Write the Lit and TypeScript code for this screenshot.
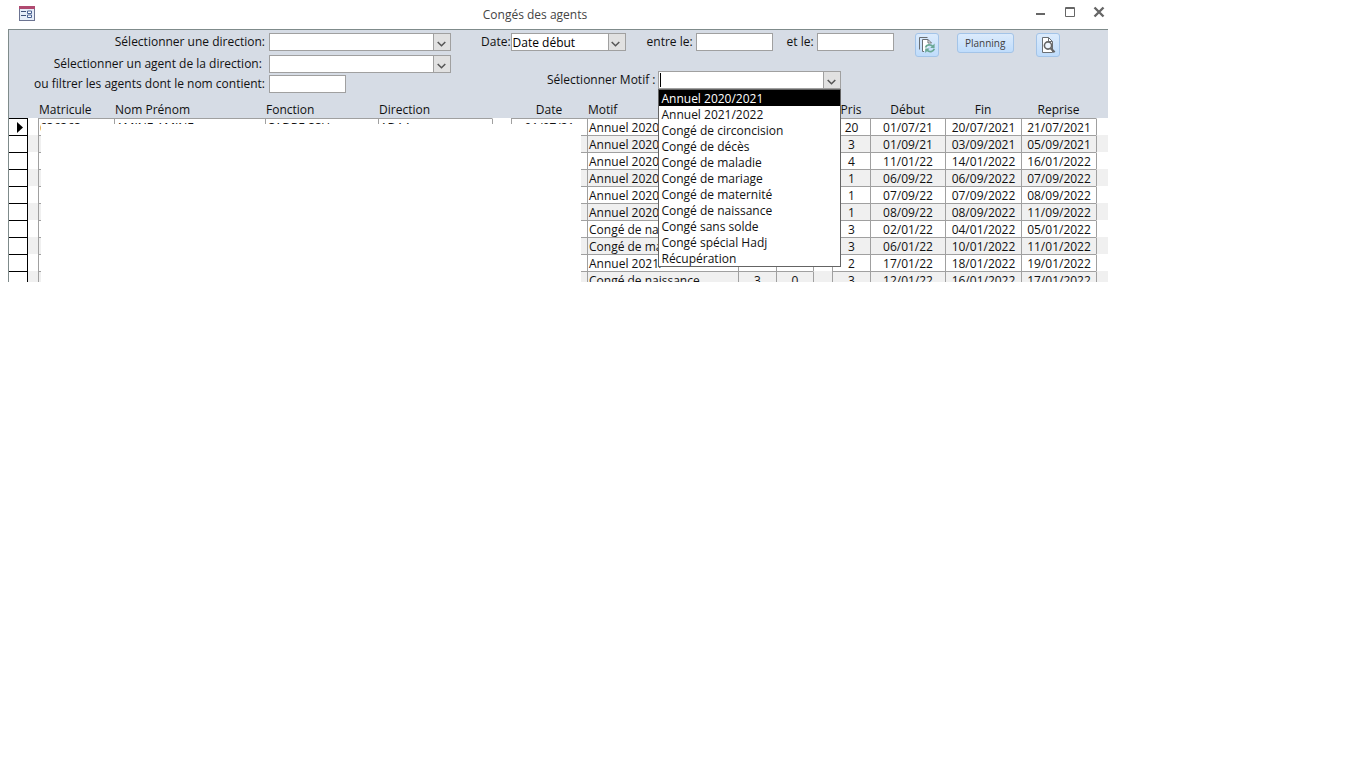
import { LitElement, html, css } from "lit";
import { customElement } from "lit/decorators.js";

const MOTIFS = [
  "Annuel 2020/2021",
  "Annuel 2021/2022",
  "Congé de circoncision",
  "Congé de décès",
  "Congé de maladie",
  "Congé de mariage",
  "Congé de maternité",
  "Congé de naissance",
  "Congé sans solde",
  "Congé spécial Hadj",
  "Récupération",
];

interface Conge {
  motif: string;
  droit?: string;
  reste?: string;
  pris: string;
  debut: string;
  fin: string;
  reprise: string;
}

const ROWS: Conge[] = [
  { motif: "Annuel 2020", pris: "20", debut: "01/07/21", fin: "20/07/2021", reprise: "21/07/2021" },
  { motif: "Annuel 2020", pris: "3", debut: "01/09/21", fin: "03/09/2021", reprise: "05/09/2021" },
  { motif: "Annuel 2020", pris: "4", debut: "11/01/22", fin: "14/01/2022", reprise: "16/01/2022" },
  { motif: "Annuel 2020", pris: "1", debut: "06/09/22", fin: "06/09/2022", reprise: "07/09/2022" },
  { motif: "Annuel 2020", pris: "1", debut: "07/09/22", fin: "07/09/2022", reprise: "08/09/2022" },
  { motif: "Annuel 2020", pris: "1", debut: "08/09/22", fin: "08/09/2022", reprise: "11/09/2022" },
  { motif: "Congé de nai", pris: "3", debut: "02/01/22", fin: "04/01/2022", reprise: "05/01/2022" },
  { motif: "Congé de ma", pris: "3", debut: "06/01/22", fin: "10/01/2022", reprise: "11/01/2022" },
  { motif: "Annuel 2021/", pris: "2", debut: "17/01/22", fin: "18/01/2022", reprise: "19/01/2022" },
  { motif: "Congé de naissance", droit: "3", reste: "0", pris: "3", debut: "12/01/22", fin: "16/01/2022", reprise: "17/01/2022" },
];

const COLUMNS = [19, 10, 76, 151, 113, 114, 19, 76, 151, 38, 37, 19, 38, 75, 76, 75, 12];

const chevron = html`<svg width="9" height="6" viewBox="0 0 9 6" aria-hidden="true">
  <path d="M0.7 1L4.5 4.8L8.3 1" fill="none" stroke="#555" stroke-width="1.5" />
</svg>`;

@customElement("app-root")
export class AppRoot extends LitElement {
  static styles = css`
    :host {
      display: block;
      min-height: 100vh;
      background: #fff;
      color: #111;
      font: 12px/18px "Open Sans", "Noto Sans", sans-serif;
    }
    .window {
      max-width: 1100px;
      margin-left: 8px;
    }
    .titlebar {
      display: flex;
      align-items: center;
      height: 29px;
      padding: 0 3px 0 11px;
    }
    .titlebar > svg {
      margin-bottom: 2px;
    }
    .title {
      flex: 1;
      margin: 0;
      font-size: 12px;
      font-weight: 400;
      text-align: center;
      color: #444;
    }
    .controls {
      display: flex;
      gap: 17px;
      padding-bottom: 5px;
    }
    button {
      font: inherit;
      padding: 0;
      border: 0;
      background: none;
      color: inherit;
    }
    .control {
      display: grid;
      place-items: center;
      width: 12px;
      height: 12px;
    }
    .form {
      border-top: 1px solid #7f8b8b;
      border-left: 1px solid #7f8b8b;
      background: #d6dce5;
    }
    .filters {
      display: flex;
      padding-top: 3px;
    }
    .left {
      display: grid;
      grid-template-columns: 260px 182px;
      grid-template-rows: 22px 20px 18px;
      align-items: start;
    }
    .left label {
      justify-self: end;
      padding-right: 4px;
      white-space: pre;
    }
    .right {
      flex: 1;
      display: flex;
      flex-direction: column;
      gap: 14px;
      padding-left: 30px;
    }
    .line {
      display: flex;
      align-items: flex-start;
      height: 24px;
    }
    .line label {
      white-space: nowrap;
    }
    .motif-line {
      height: 18px;
      padding-left: 66px;
    }
    .spaced {
      padding-right: 3px;
    }
    .entre {
      padding-left: 21px;
    }
    .et {
      padding-left: 14px;
    }
    input,
    select {
      box-sizing: border-box;
      width: 100%;
      height: 18px;
      margin: 0;
      padding: 0 1px;
      border: 1px solid #a0a0a0;
      border-radius: 0;
      background: #fff;
      color: #000;
      font: inherit;
      appearance: none;
      outline: none;
    }
    .short {
      width: 77px;
    }
    .combo {
      position: relative;
      display: grid;
      grid-template-columns: 1fr 18px;
      height: 18px;
    }
    .combo > select,
    .combo > input {
      grid-area: 1 / 1 / 2 / 3;
    }
    .arrow {
      grid-area: 1 / 2;
      box-sizing: border-box;
      display: grid;
      place-items: center;
      height: 18px;
      padding: 3px 2px 0 0;
      border: 1px solid #a0a0a0;
      background: #e1e1e1;
      z-index: 1;
      pointer-events: none;
    }
    button.arrow {
      pointer-events: auto;
    }
    .date-combo {
      width: 115px;
    }
    .motif-combo {
      width: 183px;
    }
    .caret {
      position: absolute;
      left: 2px;
      top: 2px;
      width: 1px;
      height: 14px;
      background: #000;
    }
    .list {
      position: absolute;
      top: 18px;
      left: 0;
      right: 0;
      z-index: 3;
      margin: 0;
      padding: 0;
      border: 1px solid #646464;
      background: #fff;
      list-style: none;
      line-height: 14px;
    }
    .option {
      padding: 2px 2px 0;
    }
    .option[aria-selected="true"] {
      background: #000;
      color: #fff;
    }
    .action {
      box-sizing: border-box;
      display: grid;
      place-items: center;
      width: 24px;
      height: 24px;
      border: 1px solid #a3c4e8;
      border-radius: 3px;
      background: linear-gradient(#dcebfc, #bfdcfb);
    }
    .refresh {
      margin-left: 21px;
    }
    .planning {
      width: 57px;
      height: 20px;
      margin: 0 22px 0 18px;
      color: #404040;
      font-size: 10px;
      line-height: 18px;
    }
    .records {
      position: relative;
      height: 189px;
      overflow: hidden;
    }
    table {
      width: 100%;
      table-layout: fixed;
      border-collapse: separate;
      border-spacing: 0;
    }
    th {
      height: 17px;
      padding: 8px 0 0 1px;
      line-height: 17px;
      font-weight: 400;
      text-align: left;
      white-space: nowrap;
    }
    td {
      box-sizing: border-box;
      height: 17px;
      padding: 2px 0 0 1px;
      overflow: hidden;
      line-height: 14px;
      white-space: nowrap;
      border-left: 1px solid #a0a0a0;
      border-top: 1px solid #a0a0a0;
    }
    tbody tr {
      background: #fff;
    }
    tbody tr:nth-child(even) {
      background: #f0f0f0;
    }
    .center {
      padding-left: 0;
      text-align: center;
    }
    .gap {
      border-top-color: transparent;
    }
    .first-gap {
      border-color: transparent;
    }
    .selector {
      padding: 0;
      border-left: 0;
      border-top: 1px solid #000;
      border-right: 1px solid #000;
      background: #fff;
    }
    .selector svg {
      display: block;
      margin-left: 8px;
    }
    .mask {
      position: absolute;
      inset: 31px 527px 0 32px;
      background: #fff;
    }
  `;

  private combo(id: string) {
    return html`<div class="combo">
      <select id=${id}><option></option></select>
      <span class="arrow">${chevron}</span>
    </div>`;
  }

  private row(r: Conge, i: number) {
    const first = i === 0;
    return html`<tr>
      <td class="selector">
        ${first
          ? html`<svg width="6" height="11" viewBox="0 0 6 11" aria-label="Enregistrement actif"><path d="M0 0L6 5.5L0 11Z" /></svg>`
          : ""}
      </td>
      <td class="gap first-gap"></td>
      <td>${first ? "636363" : ""}</td>
      <td>${first ? "AMINE AMINE" : ""}</td>
      <td>${first ? "CADRE SSU" : ""}</td>
      <td>${first ? "ADAA" : ""}</td>
      <td class="gap"></td>
      <td class="center">${first ? "01/07/21" : ""}</td>
      <td>${r.motif}</td>
      <td class="center">${r.droit ?? ""}</td>
      <td class="center">${r.reste ?? ""}</td>
      <td class="gap"></td>
      <td class="center">${r.pris}</td>
      <td class="center">${r.debut}</td>
      <td class="center">${r.fin}</td>
      <td class="center">${r.reprise}</td>
      <td class="gap"></td>
    </tr>`;
  }

  render() {
    return html`<main class="window">
      <header class="titlebar">
        <svg width="16" height="15" viewBox="0 0 16 15" aria-hidden="true">
          <rect x="0.5" y="0.5" width="15" height="14" fill="#e6edf8" stroke="#6b7391" />
          <rect width="16" height="3" fill="#b04a70" />
          <path d="M2 5.5H7M2 9.5H7" stroke="#3f5279" />
          <path d="M8.5 5H12.5V7.5H8.5ZM8.5 9H12.5V11.5H8.5Z" fill="#fff" stroke="#4a6293" />
        </svg>
        <h1 class="title">Congés des agents</h1>
        <div class="controls">
          <button class="control" aria-label="Réduire">
            <svg width="12" height="12" viewBox="0 0 12 12"><path d="M1 8H10" stroke="#666" stroke-width="2" /></svg>
          </button>
          <button class="control" aria-label="Agrandir">
            <svg width="12" height="12" viewBox="0 0 12 12"><path d="M1.5 1.5H10.5V10.5H1.5ZM1 2.5H11" fill="none" stroke="#666" /></svg>
          </button>
          <button class="control" aria-label="Fermer">
            <svg width="12" height="12" viewBox="0 0 12 12"><path d="M1.5 1.5L10.5 10.5M10.5 1.5L1.5 10.5" stroke="#666" stroke-width="2.4" /></svg>
          </button>
        </div>
      </header>
      <section class="form">
        <div class="filters">
          <div class="left">
            <label for="direction">Sélectionner une direction:</label>
            ${this.combo("direction")}
            <label for="agent">Sélectionner un agent de la direction: </label>
            ${this.combo("agent")}
            <label for="nom">ou filtrer les agents dont le nom contient:</label>
            <input id="nom" class="short" type="text" />
          </div>
          <div class="right">
            <div class="line">
              <label for="date">Date:</label>
              <div class="combo date-combo">
                <select id="date"><option>Date début</option></select>
                <span class="arrow">${chevron}</span>
              </div>
              <label class="spaced entre" for="entre">entre le:</label>
              <input id="entre" class="short" type="text" />
              <label class="spaced et" for="et">et le:</label>
              <input id="et" class="short" type="text" />
              <button class="action refresh" aria-label="Actualiser">
                <svg width="18" height="18" viewBox="0 0 18 18" fill="none">
                  <path d="M1.5 13.5V1.5H9.5" stroke="#6a6f74" />
                  <path d="M6 15.5H4.5V3.5H10L13.5 7" stroke="#6a6f74" fill="#fff" />
                  <path d="M10 3.5V7H13.5" stroke="#6a6f74" />
                  <path d="M7.5 11.5C8.5 8.5 12.5 8 14.8 10.3M16.3 12.8C15.3 16 11.3 16.6 9 14.2" stroke="#6aa896" stroke-width="1.8" />
                  <path d="M16.6 7.5V12H12.2ZM7.2 17V12.6H11.6Z" fill="#6aa896" />
                </svg>
              </button>
              <button class="action planning">Planning</button>
              <button class="action" aria-label="Aperçu">
                <svg width="16" height="18" viewBox="0 0 16 18" fill="none">
                  <path d="M2.5 1.5H8.5L12.5 5.5V16.5H2.5Z" fill="#fff" stroke="#6a6f74" />
                  <path d="M8.5 1.5V5.5H12.5" stroke="#6a6f74" />
                  <circle cx="8" cy="9.5" r="3.6" fill="#eef5fd" stroke="#666" stroke-width="1.6" />
                  <path d="M10.6 12.2L14.6 16.2" stroke="#666" stroke-width="2.2" />
                </svg>
              </button>
            </div>
            <div class="line motif-line">
              <label class="spaced" for="motif">Sélectionner Motif :</label>
              <div class="combo motif-combo">
                <input id="motif" type="text" role="combobox" aria-expanded="true" aria-controls="motifs" />
                <span class="caret"></span>
                <button class="arrow" aria-label="Ouvrir la liste">${chevron}</button>
                <ul class="list" id="motifs" role="listbox">
                  ${MOTIFS.map(
                    (m, i) => html`<li class="option" role="option" aria-selected=${i === 0 ? "true" : "false"}>${m}</li>`
                  )}
                </ul>
              </div>
            </div>
          </div>
        </div>
        <div class="records">
          <table>
            <colgroup>
              ${COLUMNS.map((w) => html`<col style="width:${w}px" />`)}
            </colgroup>
            <thead>
              <tr>
                <th></th>
                <th></th>
                <th>Matricule</th>
                <th>Nom Prénom</th>
                <th>Fonction</th>
                <th>Direction</th>
                <th></th>
                <th class="center">Date</th>
                <th>Motif</th>
                <th></th>
                <th></th>
                <th></th>
                <th class="center">Pris</th>
                <th class="center">Début</th>
                <th class="center">Fin</th>
                <th class="center">Reprise</th>
                <th></th>
              </tr>
            </thead>
            <tbody>
              ${ROWS.map((r, i) => this.row(r, i))}
            </tbody>
          </table>
          <div class="mask"></div>
        </div>
      </section>
    </main>`;
  }
}
